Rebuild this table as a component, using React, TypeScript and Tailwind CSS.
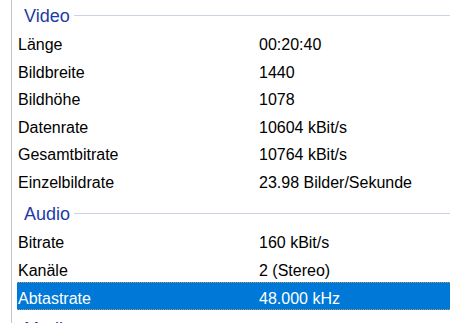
import React from "react";

type Row = { label: string; value: string; selected?: boolean };
type Group = { title: string; rows: Row[] };

const groups: Group[] = [
  {
    title: "Video",
    rows: [
      { label: "Länge", value: "00:20:40" },
      { label: "Bildbreite", value: "1440" },
      { label: "Bildhöhe", value: "1078" },
      { label: "Datenrate", value: "10604 kBit/s" },
      { label: "Gesamtbitrate", value: "10764 kBit/s" },
      { label: "Einzelbildrate", value: "23.98 Bilder/Sekunde" },
    ],
  },
  {
    title: "Audio",
    rows: [
      { label: "Bitrate", value: "160 kBit/s" },
      { label: "Kanäle", value: "2 (Stereo)" },
      { label: "Abtastrate", value: "48.000 kHz", selected: true },
    ],
  },
  {
    title: "Medien",
    rows: [{ label: "Produzenten", value: "" }],
  },
];

function GroupHeader({ title }: { title: string }) {
  return (
    <div className="h-[33px] pt-[9.65px] flex items-start">
      <div className="flex items-center w-full h-[20px] pl-[7px]">
        <span className="text-[18px] leading-[20px] text-[#1e3aa8]">{title}</span>
        <div className="flex-1 h-px bg-[#cbd3e6] ml-[4px] mb-[1px]" />
      </div>
    </div>
  );
}

function PropertyRow({ row }: { row: Row }) {
  const base = "h-[27.5px] pt-[7px] flex text-[16px] leading-[18px] pl-[1px]";
  const tone = row.selected
    ? "bg-[#0078d7] text-white border-y border-dotted border-[#a89a80] pt-[6px]"
    : "text-black";
  return (
    <div className={`${base} ${tone}`}>
      <span className="w-[241px] shrink-0 whitespace-nowrap">{row.label}</span>
      <span className="whitespace-nowrap">{row.value}</span>
    </div>
  );
}

export default function App() {
  return (
    <div
      className="w-[450px] h-[323px] bg-white overflow-hidden flex"
      style={{ fontFamily: '"Liberation Sans", Arial, sans-serif' }}
    >
      <div className="w-[11px] shrink-0 bg-white" />
      <div className="flex-1 border-l border-[#c4c4c4] overflow-hidden pl-[5px]">
        <div className="-mt-[4px]">
          {groups.map((g) => (
            <div key={g.title}>
              <GroupHeader title={g.title} />
              {g.rows.map((r) => (
                <PropertyRow key={r.label} row={r} />
              ))}
            </div>
          ))}
        </div>
      </div>
    </div>
  );
}
